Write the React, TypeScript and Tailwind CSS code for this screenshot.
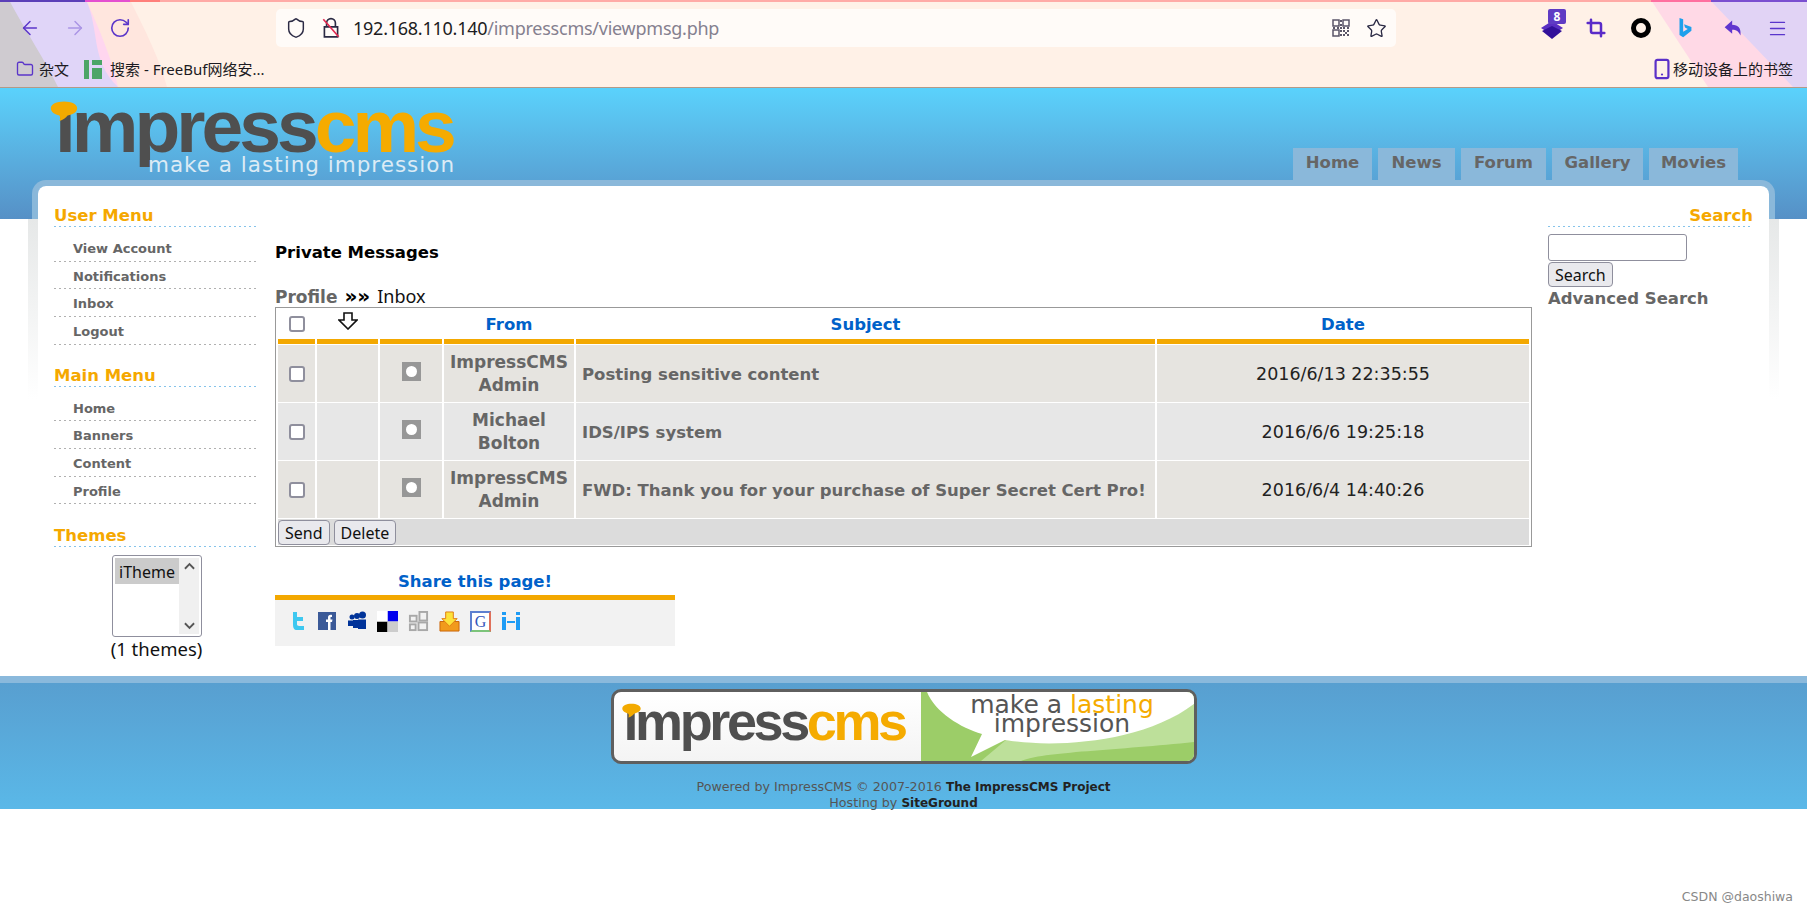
import React from "react";
import { ArrowLeft, ArrowRight, RotateCw, Shield, Star, Menu, Crop, Folder, Smartphone } from "lucide-react";

const userMenu = ["View Account", "Notifications", "Inbox", "Logout"];
const mainMenu = ["Home", "Banners", "Content", "Profile"];
const tabs = [
  { label: "Home", width: "w-[79px]" },
  { label: "News", width: "w-[77px]" },
  { label: "Forum", width: "w-[85px]" },
  { label: "Gallery", width: "w-[91px]" },
  { label: "Movies", width: "w-[89px]" },
];
const messages = [
  { from: ["ImpressCMS", "Admin"], subject: "Posting sensitive content", date: "2016/6/13 22:35:55", bg: "bg-[#e6e4e0]" },
  { from: ["Michael", "Bolton"], subject: "IDS/IPS system", date: "2016/6/6 19:25:18", bg: "bg-[#e7e7e7]" },
  { from: ["ImpressCMS", "Admin"], subject: "FWD: Thank you for your purchase of Super Secret Cert Pro!", date: "2016/6/4 14:40:26", bg: "bg-[#e6e4e0]" },
];

const Checkbox = () => (
  <span className="block w-[16px] h-[16px] mx-auto bg-white border-2 border-[#8f8f9d] rounded-[3px]" />
);

const SideTitle = ({ text, right }: { text: string; right?: boolean }) => (
  <h3 className={`h-[21px] leading-[20px] text-[16.500px] font-bold text-[#f5a800] bg-[linear-gradient(to_right,#86c3ea_2px,transparent_2px)] bg-[length:5px_1px] bg-repeat-x bg-bottom ${right ? "text-right" : ""}`}>
    {text}
  </h3>
);

const SideMenu = ({ title, items }: { title: string; items: string[] }) => (
  <div className="mb-[21px]">
    <SideTitle text={title} />
    <ul className="mt-[7px]">
      {items.map((item) => (
        <li key={item} className="h-[27.67px] pl-[19px] pt-[2px] flex items-center text-[13px] font-bold text-[#666] bg-[linear-gradient(to_right,#b0b0b0_2px,transparent_2px)] bg-[length:5px_1px] bg-repeat-x bg-bottom">
          {item}
        </li>
      ))}
    </ul>
  </div>
);

// the speech bubble stands in for the dot of the i, so the dot gets clipped off
const ImpressWord = ({ size, clip }: { size: string; clip: string }) => (
  <span className={`font-['Liberation_Sans',sans-serif] font-bold ${size}`}>
    <span className={`inline-block text-[#4f4f4f] ${clip}`}>i</span>
    <span className="text-[#4f4f4f]">mpress</span>
    <span className="text-[#f5ab00]">cms</span>
  </span>
);

const Bubble = ({ className }: { className: string }) => (
  <svg viewBox="0 0 30 22" className={className}>
    <path d="M15 0.500C7 0.500 0.500 3.500 0.500 8C0.500 12 5 15 10 16C11 18 11 20 10 22C14 21 17 18.500 19 16C25 15 29.500 12 29.500 8C29.500 3.500 23 0.500 15 0.500Z" fill="#f3aa00" />
  </svg>
);

const BrowserBackdrop = () => (
  <svg className="absolute inset-0 w-full h-full" viewBox="0 0 1807 87" preserveAspectRatio="none">
    <rect width="1807" height="87" fill="#fff1e7" />
    <path d="M0 0H130C145 30 160 60 167 87H0Z" fill="#ffe6de" />
    <path d="M0 0H86C100 30 112 60 118 87H0Z" fill="#ffd6ef" />
    <path d="M0 0H86C100 30 90 60 118 87H0Z" fill="#e0d5f8" />
    <path d="M0 0H9C25 30 45 60 58 87H0Z" fill="#cfcbd0" />
    <path d="M1651 0H1807V87H1708Z" fill="#ffd9e6" />
    <path d="M1710 0H1807V87H1793Z" fill="#e1d3f5" />
    <rect width="1807" height="2" fill="#ffaaa6" />
    <rect width="85" height="2" fill="#5b3fb8" />
    <rect x="85" width="45" height="2" fill="#e44fd0" />
    <rect x="130" width="30" height="2" fill="#ff7f7a" />
    <rect x="1651" width="60" height="2" fill="#ff6f9f" />
    <rect x="1711" width="96" height="2" fill="#7a4fd0" />
  </svg>
);

const BrowserChrome = () => (
  <div className="relative h-[88px] border-b border-[#b49a88] font-['Noto_Sans','Noto_Sans_CJK_SC',sans-serif] text-[#1c1b22]">
    <BrowserBackdrop />
    <div className="relative flex items-center h-[54px] pt-[2px]">
      <div className="flex items-center w-[276px] pl-[19px] gap-[23px] text-[#5b36c9]">
        <ArrowLeft size={22} strokeWidth={1.6} />
        <ArrowRight size={22} strokeWidth={1.6} className="opacity-40" />
        <RotateCw size={22} strokeWidth={1.8} />
      </div>
      <div className="flex items-center w-[1120px] h-[38px] bg-[#fffbf8] rounded-[5px] pl-[9px]">
        <Shield size={22} strokeWidth={1.6} className="text-[#2b2a44]" />
        <svg viewBox="0 0 18 20" className="w-[20px] h-[22px] ml-[14px]">
          <path d="M5 9V5.500a4 4 0 0 1 8 0V9M3 9h12v9H3Z" fill="none" stroke="#2b2a44" strokeWidth="1.500" />
          <path d="M2 2L16 18" stroke="#e22850" strokeWidth="1.500" />
        </svg>
        <span className="ml-[12px] text-[18px] tracking-[-0.25px]">
          192.168.110.140<span className="text-[#85808f]">/impresscms/viewpmsg.php</span>
        </span>
        <svg viewBox="0 0 18 18" className="w-[18px] h-[18px] ml-auto">
          <path d="M1 1h6v6H1ZM11 1h6v6h-6ZM1 11h6v6H1Z" fill="none" stroke="#5b5668" strokeWidth="1.500" />
          <path d="M8 1h2v2H8ZM8 5h2v2H8ZM1 8h2v2H1ZM5 8h2v2H5ZM8 8h2v2H8ZM11 8h2v2h-2ZM15 8h2v2h-2ZM8 11h2v2H8ZM11 11h2v2h-2ZM15 11h2v2h-2ZM8 15h2v2H8ZM13 13h2v2h-2ZM11 15h2v2h-2ZM15 15h2v2h-2Z" fill="#5b5668" />
        </svg>
        <Star size={21} strokeWidth={1.5} className="ml-[16px] mr-[9px] text-[#2b2a44]" />
      </div>
      <div className="relative w-[24px] h-[24px] ml-[144px]">
        <svg viewBox="0 0 24 24" className="w-[24px] h-[24px]">
          <path d="M12 5L23 12L12 19L1 12Z" fill="#5a2fc2" />
          <path d="M12 10L22 15L12 23L2 15Z" fill="#32109a" />
        </svg>
        <span className="absolute -top-[7px] left-[8px] w-[18px] h-[15px] rounded-[2px] bg-[#5f3bc4] text-white text-[12px] leading-[15px] text-center font-bold">8</span>
      </div>
      <Crop size={20} strokeWidth={3} className="ml-[22px] text-[#5a2bc8]" />
      <span className="ml-[25px] w-[20px] h-[20px] rounded-full border-[5px] border-black" />
      <svg viewBox="0 0 16 24" className="ml-[26px] w-[16px] h-[22px]">
        <path d="M2 1L6 2.500V16L11 13L8 11.500L7 8L15 11V15L6 22L2 19.500Z" fill="#1fa0ec" />
      </svg>
      <svg viewBox="0 0 24 24" className="ml-[30px] w-[20px] h-[20px]">
        <path d="M11 3V8C18 8 22 12 21 21C19 16 16 14 11 14V19L2 11Z" fill="#5f35cf" />
      </svg>
      <Menu size={21} strokeWidth={1.5} className="ml-[24px] text-[#5a35cc]" />
    </div>
    <div className="relative flex items-center h-[28px] mt-[1px] text-[15px]">
      <Folder size={18} strokeWidth={1.8} className="ml-[16px] text-[#5b36c9]" />
      <span className="ml-[5px]">杂文</span>
      <span className="ml-[15px] flex gap-[3px] h-[19px]">
        <span className="w-[5px] bg-[#4ca567]" />
        <span className="flex flex-col gap-[3px] w-[10px]">
          <span className="h-[5px] bg-[#4ca567]" />
          <span className="h-[11px] bg-[#4ca567]" />
        </span>
      </span>
      <span className="ml-[8px]">搜索 - FreeBuf网络安...</span>
      <Smartphone size={22} strokeWidth={2.4} className="ml-auto text-[#5b30c8]" />
      <span className="mr-[14px]">移动设备上的书签</span>
    </div>
  </div>
);

const SiteHeader = () => (
  <div className="relative h-[131px] bg-gradient-to-b from-[#5ad2fc] to-[#5690c6] font-['DejaVu_Sans',sans-serif]">
    <div className="flex justify-between">
      <div className="relative w-[420px] ml-[50px] mt-[8px] h-[76px]">
        <span className="block pl-[5px] leading-[60px] tracking-[-4px] whitespace-nowrap">
          <ImpressWord size="text-[75px]" clip="[clip-path:inset(15px_0_0_0)]" />
        </span>
        <Bubble className="absolute left-0 top-[5px] w-[28px] h-[20px]" />
        <span className="absolute left-[98px] top-[61px] text-[21.500px] tracking-[1px] leading-[16px] text-[#dcebf5] whitespace-nowrap">
          make a lasting impression
        </span>
      </div>
      <nav className="flex gap-[6px] mt-[60px] mr-[69px]">
        {tabs.map((tab) => (
          <a key={tab.label} className={`${tab.width} h-[32px] pb-[2px] bg-[#8ab8da] text-[#666] text-[16.500px] font-bold flex items-center justify-center`}>
            {tab.label}
          </a>
        ))}
      </nav>
    </div>
  </div>
);

const Sidebar = () => (
  <div className="w-[205px] shrink-0">
    <SideMenu title="User Menu" items={userMenu} />
    <SideMenu title="Main Menu" items={mainMenu} />
    <div className="mt-[22px]">
      <SideTitle text="Themes" />
    </div>
    <div className="flex mt-[8px] ml-[58px] w-[90px] h-[82px] border border-[#8f8f9d] rounded-[3px] bg-white p-[2px] font-['Noto_Sans',sans-serif] text-[#111]">
      <div className="flex-1">
        <div className="bg-[#cbcbcb] h-[26px] leading-[28px] pl-[4px] text-[16px]">iTheme</div>
      </div>
      <div className="w-[20px] bg-[#f0f0f0] flex flex-col justify-between items-center py-[4px]">
        <svg viewBox="0 0 12 8" className="w-[11px] h-[8px]"><path d="M1 7L6 2L11 7" fill="none" stroke="#555" strokeWidth="2" /></svg>
        <svg viewBox="0 0 12 8" className="w-[11px] h-[8px]"><path d="M1 1L6 6L11 1" fill="none" stroke="#555" strokeWidth="2" /></svg>
      </div>
    </div>
    <p className="text-center text-[18.500px] leading-[24px] font-['Noto_Sans',sans-serif] text-[#111]">(1 themes)</p>
  </div>
);

const MessageTable = () => (
  <div className="border border-[#999]">
    <table className="w-full table-fixed border-separate border-spacing-x-[2px] border-spacing-y-[1px]">
      <colgroup>
        <col className="w-[37px]" />
        <col className="w-[61px]" />
        <col className="w-[62px]" />
        <col className="w-[130px]" />
        <col className="w-[579px]" />
        <col />
      </colgroup>
      <thead>
        <tr className="h-[35px]">
          <th className="border-b-[5px] border-[#f3a800]"><Checkbox /></th>
          <th className="border-b-[5px] border-[#f3a800] align-top">
            <svg viewBox="0 0 20 18" className="w-[20px] h-[18px] ml-[21px] mt-[3px]">
              <path d="M6 1H14V8H19L10 17L1 8H6Z" fill="#fff" stroke="#111" strokeWidth="1.600" />
            </svg>
          </th>
          <th className="border-b-[5px] border-[#f3a800]" />
          {["From", "Subject", "Date"].map((head) => (
            <th key={head} className="border-b-[5px] border-[#f3a800] pt-[3px] text-[16.500px] font-bold text-[#0061c9] text-center">{head}</th>
          ))}
        </tr>
      </thead>
      <tbody>
        {messages.map((msg) => (
          <tr key={msg.subject} className={`h-[57px] ${msg.bg}`}>
            <td><Checkbox /></td>
            <td />
            <td>
              <span className="relative block w-[19px] h-[19px] mx-auto -mt-[4px] bg-[#979797]">
                <span className="absolute left-[4px] top-[4px] w-[11px] h-[11px] rounded-full bg-white blur-[0.5px]" />
              </span>
            </td>
            <td className="pt-[1px] text-center text-[17px] leading-[23px] font-bold text-[#666]">
              {msg.from[0]}<br />{msg.from[1]}
            </td>
            <td className="pl-[6px] pt-[3px] text-[16.500px] font-bold text-[#666] whitespace-nowrap">{msg.subject}</td>
            <td className="pt-[2px] text-center text-[17.500px] text-[#222]">{msg.date}</td>
          </tr>
        ))}
        <tr className="bg-[#dcdcdc] h-[26px]">
          <td colSpan={6} className="p-0">
            <div className="flex gap-[4px] font-['Noto_Sans',sans-serif] text-[16px] text-[#111]">
              <button className="h-[25px] px-[6px] bg-[#e9e9ed] border border-[#8f8f9d] rounded-[4px]">Send</button>
              <button className="h-[25px] px-[6px] bg-[#e9e9ed] border border-[#8f8f9d] rounded-[4px]">Delete</button>
            </div>
          </td>
        </tr>
      </tbody>
    </table>
  </div>
);

const ShareIcons = () => (
  <div className="flex items-center gap-[10px] h-[46px] pl-[12px] pb-[4px]">
    <svg viewBox="0 0 20 20" className="w-[20px] h-[20px]"><path d="M6 1H10V6H16V10H10V13C10 15 11 15 17 15V19H10C7 19 6 17 6 13Z" fill="#3ec8f0" /></svg>
    <svg viewBox="0 0 20 20" className="w-[20px] h-[20px]"><rect x="1" y="1" width="18" height="18" fill="#3b5a98" /><path d="M11 19V11H9V8.500H11V6.500C11 4.500 12.500 3.500 15 4V6H14C13.500 6 13.500 6.500 13.500 7V8.500H15.500L15 11H13.500V19Z" fill="#fff" /></svg>
    <svg viewBox="0 0 20 20" className="w-[20px] h-[20px]"><circle cx="5" cy="6" r="2.500" fill="#003399" /><circle cx="10" cy="5" r="3" fill="#003399" /><circle cx="15.500" cy="4" r="3.500" fill="#003399" /><path d="M1 9.500H8V15H1ZM6 9H13V17H6ZM11 8.500H19V18H11Z" fill="#003399" /></svg>
    <svg viewBox="0 0 22 22" className="w-[21px] h-[21px]"><rect x="11" y="0" width="11" height="11" fill="#0000ee" /><rect x="0" y="11" width="11" height="11" fill="#000" /><rect x="11" y="11" width="11" height="11" fill="#ccc" /><rect x="0" y="0" width="11" height="11" fill="#fff" /></svg>
    <svg viewBox="0 0 22 22" className="w-[21px] h-[21px]" fill="none" stroke="#a8a8a8" strokeWidth="2"><rect x="2" y="5" width="7" height="6" /><rect x="12" y="1" width="8" height="9" /><rect x="2" y="14" width="6" height="6" /><rect x="11" y="12" width="9" height="8" /></svg>
    <svg viewBox="0 0 22 22" className="w-[21px] h-[21px]"><path d="M1 11H21V21H1Z" fill="#f19a1c" stroke="#c9660a" /><path d="M7 1H15V8H19L11 16L3 8H7Z" fill="#fde23a" stroke="#e07a10" /></svg>
    <span className="w-[21px] h-[21px] border-2 border-t-[#5d7fd0] border-l-[#5d7fd0] border-r-[#e0705a] border-b-[#7cc47a] bg-white text-[#3355bb] text-[16px] leading-[17px] text-center font-['Liberation_Serif',serif]">G</span>
    <svg viewBox="0 0 20 20" className="w-[20px] h-[20px]"><path d="M1 1H5V4H1ZM15 1H19V4H15ZM1 6H5V19H1ZM15 6H19V19H15ZM6 10H14V12H6Z" fill="#1e9cf5" /></svg>
  </div>
);

const MainColumn = () => (
  <div className="w-[1257px] shrink-0 font-['DejaVu_Sans',sans-serif]">
    <h2 className="mt-[37px] h-[20px] leading-[20px] text-[16.500px] font-bold text-black">Private Messages</h2>
    <p className="mt-[20px] h-[24px] leading-[26px] text-[17px] whitespace-nowrap">
      <span className="font-bold text-[#666]">Profile</span>
      <span className="font-bold text-black text-[20px]"> »» </span>
      <span className="font-['Noto_Sans',sans-serif] text-[18px] text-[#111]">Inbox</span>
    </p>
    <MessageTable />
    <h4 className="w-[400px] mt-[25px] h-[20px] leading-[20px] text-center text-[16.500px] font-bold text-[#0061c9]">Share this page!</h4>
    <div className="w-[400px] mt-[3px] border-t-[5px] border-[#f3a800] bg-[#f2f2f2]">
      <ShareIcons />
    </div>
  </div>
);

const SearchColumn = () => (
  <div className="w-[205px] shrink-0">
    <SideTitle text="Search" right />
    <input className="block mt-[7px] w-[139px] h-[27px] bg-white border border-[#8f8f9d] rounded-[3px]" />
    <button className="block mt-[1px] h-[25px] px-[6px] bg-[#e9e9ed] border border-[#8f8f9d] rounded-[4px] font-['Noto_Sans',sans-serif] text-[16px] text-[#111]">Search</button>
    <p className="mt-[1px] text-[16.500px] leading-[22px] font-bold text-[#666] whitespace-nowrap">Advanced Search</p>
  </div>
);

const SiteFooter = () => (
  <div className="h-[133px] border-t-[7px] border-[#8ab9dc] bg-gradient-to-b from-[#589fd0] to-[#5ab8e8] font-['DejaVu_Sans',sans-serif]">
    <div className="relative flex mx-auto mt-[6px] w-[586px] h-[75px] border-[3px] border-[#5f5f5f] rounded-[10px] overflow-hidden bg-gradient-to-b from-white to-[#f4f4f4]">
      <div className="relative w-[307px] pl-[10px] pt-[2px] leading-[54px] tracking-[-3.400px] whitespace-nowrap">
        <ImpressWord size="text-[54px]" clip="[clip-path:inset(16px_0_0_0)]" />
        <Bubble className="absolute left-[8px] top-[11px] w-[19px] h-[15px]" />
      </div>
      <div className="relative flex-1 bg-[#9ccd68]">
        <svg viewBox="0 0 273 69" className="absolute inset-0 w-full h-full" preserveAspectRatio="none">
          <path d="M60 69L85 48C130 55 220 50 273 12V50C200 58 120 60 100 69Z" fill="#bde09a" />
          <path d="M6 0C14 20 40 36 61 42L50 65L84 48C130 56 220 52 273 12V0Z" fill="#fff" />
        </svg>
        <div className="relative text-center text-[25px] leading-[19px] pt-[3px] text-[#555] whitespace-nowrap pl-[10px]">
          <div>make a <span className="text-[#f5ab00]">lasting</span></div>
          <div>impression</div>
        </div>
      </div>
    </div>
    <div className="mt-[15px] text-center text-[12.700px] leading-[15px] text-[#555]">
      <div>Powered by ImpressCMS © 2007-2016 <b className="text-[12px] text-[#222]">The ImpressCMS Project</b></div>
      <div>Hosting by <b className="text-[12px] text-[#222]">SiteGround</b></div>
    </div>
  </div>
);

export default function App() {
  return (
    <div className="relative min-h-[912px] bg-white font-['DejaVu_Sans',sans-serif]">
      <BrowserChrome />
      <SiteHeader />
      <div className="relative -mt-[39px] mx-[32px] h-[496px]">
        <div className="absolute -left-[4px] top-[39px] w-[10px] h-[180px] bg-gradient-to-b from-[#e6e8e8] to-white" />
        <div className="absolute -right-[4px] top-[39px] w-[10px] h-[180px] bg-gradient-to-b from-[#e6e8e8] to-white" />
        <div className="absolute inset-x-0 top-0 h-[39px] border-[6px] border-b-0 border-[#8ab8da] rounded-t-[14px]" />
        <div className="absolute inset-x-[6px] top-[6px] h-[33px] bg-white rounded-t-[8px]" />
        <div className="relative flex gap-[16px] pl-[22px] pt-[26px]">
          <Sidebar />
          <MainColumn />
          <SearchColumn />
        </div>
      </div>
      <SiteFooter />
      <p className="text-right pr-[14px] mt-[80px] text-[12.500px] leading-[16px] text-[#888]">CSDN @daoshiwa</p>
    </div>
  );
}
